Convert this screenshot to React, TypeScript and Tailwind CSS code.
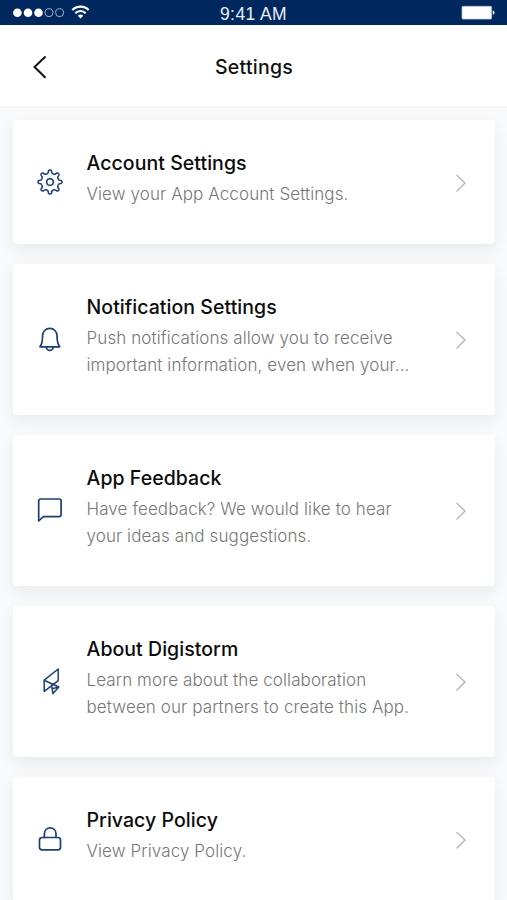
import type { ReactNode } from "react";

const point = (deg: number, r: number) => {
  const a = ((deg - 90) * Math.PI) / 180;
  return `${(14 + r * Math.cos(a)).toFixed(2)} ${(14 + r * Math.sin(a)).toFixed(2)}`;
};

const gearPath =
  `M${point(-8, 11.2)}` +
  Array.from({ length: 8 }, (_, i) => {
    const a = i * 45;
    return `A1.7 1.7 0 0 1 ${point(a + 8, 11.2)}A2.9 2.9 0 0 0 ${point(a + 37, 11.2)}`;
  }).join("") +
  "Z";

function Icon({ children, width = 1.7 }: { children: ReactNode; width?: number }) {
  return (
    <svg
      width="28"
      height="28"
      viewBox="0 0 28 28"
      fill="none"
      stroke="#1d3f78"
      strokeWidth={width}
      strokeLinecap="round"
      strokeLinejoin="round"
      className="shrink-0"
    >
      {children}
    </svg>
  );
}

const items = [
  {
    title: "Account Settings",
    lines: ["View your App Account Settings."],
    icon: (
      <Icon width={1.5}>
        <path d={gearPath} />
        <circle cx="14" cy="14" r="3.3" />
      </Icon>
    ),
  },
  {
    title: "Notification Settings",
    lines: ["Push notifications allow you to receive", "important information, even when your..."],
    icon: (
      <Icon>
        <path d="M4 21.8C6 19.4 6.6 17.6 6.6 10.6a7.2 7.2 0 0 1 14.4 0c0 7 .7 8.8 2.7 11.2ZM10.4 22a3.4 3.4 0 0 0 6.8 0" />
      </Icon>
    ),
  },
  {
    title: "App Feedback",
    lines: ["Have feedback? We would like to hear", "your ideas and suggestions."],
    icon: (
      <Icon>
        <path d="M2.7 25V5a2 2 0 0 1 2-2H23.1a2 2 0 0 1 2 2V18.6a2 2 0 0 1-2 2H7.3Z" />
      </Icon>
    ),
  },
  {
    title: "About Digistorm",
    lines: ["Learn more about the collaboration", "between our partners to create this App."],
    icon: (
      <Icon width={1.5}>
        <path d="M22.2 2 8.2 13.2V24.4L22.2 13.6ZM8.2 13.2 22.8 20 17 26.6 15.6 18.6M17.2 21.4 22.8 20" />
      </Icon>
    ),
  },
  {
    title: "Privacy Policy",
    lines: ["View Privacy Policy."],
    icon: (
      <Icon>
        <rect x="3.5" y="12.5" width="21" height="12.4" rx="2.6" />
        <path d="M8.4 12.5V8.6a5.8 5.8 0 0 1 11.6 0v3.9" />
      </Icon>
    ),
  },
];

function StatusBar() {
  return (
    <div className="grid h-[25px] shrink-0 grid-cols-3 items-center bg-[#00285e] text-white">
      <svg width="100" height="25" viewBox="0 0 100 25" fill="none">
        <circle cx="17.4" cy="12.7" r="4.3" fill="#fff" />
        <circle cx="28" cy="12.7" r="4.3" fill="#fff" />
        <circle cx="38.5" cy="12.7" r="4.3" fill="#fff" />
        <circle cx="49" cy="12.7" r="4" stroke="#c8d2e0" strokeWidth="0.8" />
        <circle cx="59.6" cy="12.7" r="4" stroke="#c8d2e0" strokeWidth="0.8" />
        <path
          d="M72.3 10.1a11.5 11.5 0 0 1 16.4 0M75.3 13.2a7.2 7.2 0 0 1 10.4 0"
          stroke="#fff"
          strokeWidth="2.1"
        />
        <path d="M77.8 15.8a3.8 3.8 0 0 1 5.4 0L80.5 18.6Z" fill="#fff" />
      </svg>
      <div className="pt-[3px] text-center font-['Liberation_Sans',sans-serif] text-[17.5px] leading-[22px] tracking-[0.4px] whitespace-nowrap text-[#e9eef5]">
        9:41 AM
      </div>
      <svg width="48" height="25" viewBox="0 0 48 25" className="justify-self-end">
        <rect x="3" y="6.3" width="29.6" height="12.8" rx="1.2" fill="#fff" stroke="#aebdd2" strokeWidth="0.8" />
        <path d="M33.8 10.3Q37.4 12.6 33.8 15Z" fill="#fff" />
      </svg>
    </div>
  );
}

export default function App() {
  return (
    <div className="flex h-[900px] w-[507px] flex-col overflow-hidden bg-[#f8fafb] font-['Inter',sans-serif]">
      <StatusBar />
      <header className="grid h-[83px] shrink-0 grid-cols-3 items-center border-b-2 border-[#f5f6f7] bg-white">
        <svg width="60" height="28" viewBox="0 0 60 28" fill="none" stroke="#111" strokeWidth="2" className="mt-0.5">
          <path d="M45.5 3.5 34.5 14 45.5 24.7" />
        </svg>
        <h1 className="pt-1 pl-px text-center text-[19.5px] font-medium tracking-[0.25px] text-[#111]">Settings</h1>
      </header>
      <main className="flex flex-col gap-[19.5px] pt-[11.5px] pr-[12px] pl-[13px]">
        {items.map((item) => (
          <section
            key={item.title}
            className="flex shrink-0 items-center rounded-[4px] bg-white pr-[28px] pl-[23px] shadow-[0_6px_16px_rgba(30,45,60,0.07)]"
          >
            {item.icon}
            <div className="ml-[22.5px] flex-1 pt-[28.5px] pb-[36px] whitespace-nowrap">
              <h2 className="text-[19.5px] leading-[30px] font-medium tracking-[0.05px] text-[#0c0c0c]">
                {item.title}
              </h2>
              <div className="pt-[3px]">
                {item.lines.map((line) => (
                  <p key={line} className="text-[17px] leading-[27px] font-light tracking-[0.1px] text-[#777]">
                    {line}
                  </p>
                ))}
              </div>
            </div>
            <svg
              width="12"
              height="20"
              viewBox="0 0 12 20"
              fill="none"
              stroke="#b9b9b9"
              strokeWidth="1.5"
              className="mt-0.5"
            >
              <path d="M1.5 2 10 10 1.5 18.5" />
            </svg>
          </section>
        ))}
      </main>
    </div>
  );
}
